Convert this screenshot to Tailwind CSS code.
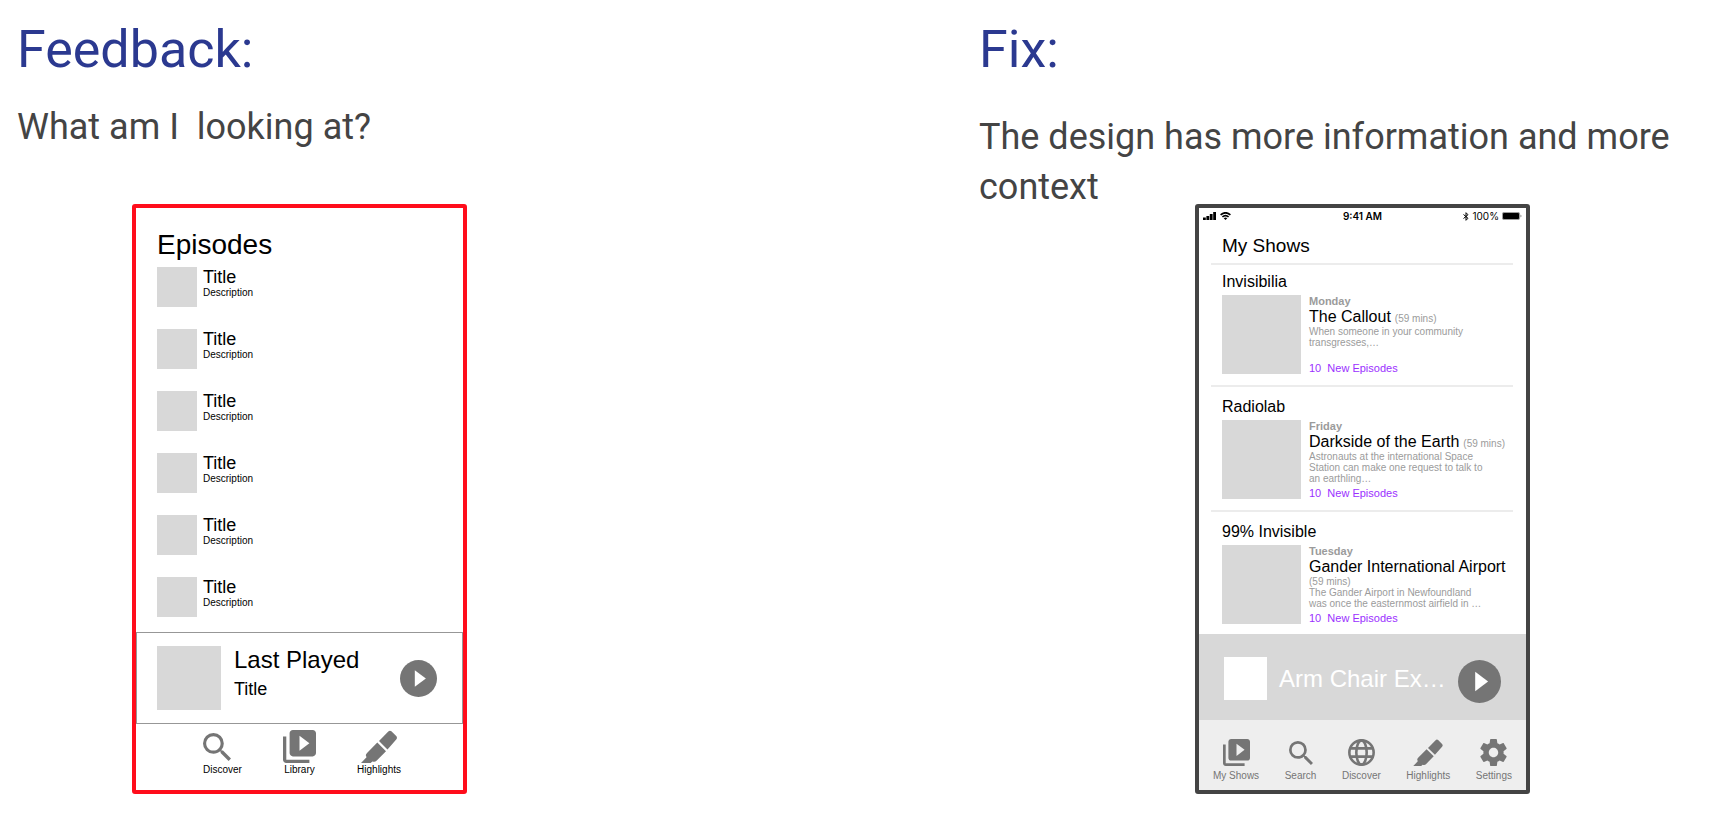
<!DOCTYPE html>
<html lang="en">
<head>
<meta charset="utf-8">
<title>Feedback and fix</title>
<script src="https://cdn.jsdelivr.net/npm/@tailwindcss/browser@4"></script>
</head>
<body class="bg-white font-['Liberation_Sans',Arial,sans-serif] text-black">
<svg class="hidden" aria-hidden="true">
  <symbol id="search" viewBox="3 3 17.5 17.5"><path d="M15.5 14h-.79l-.28-.27A6.471 6.471 0 0 0 16 9.5 6.5 6.5 0 1 0 9.5 16c1.61 0 3.09-.59 4.23-1.57l.27.28v.79l5 4.99L20.49 19l-4.99-5zm-6 0C7.01 14 5 11.99 5 9.5S7.01 5 9.5 5 14 7.01 14 9.5 11.99 14 9.5 14z"/></symbol>
  <symbol id="library" viewBox="2 2 20 20"><path d="M4 6H2v14c0 1.1.9 2 2 2h14v-2H4V6zm16-4H8c-1.1 0-2 .9-2 2v12c0 1.1.9 2 2 2h12c1.1 0 2-.9 2-2V4c0-1.1-.9-2-2-2zm-8 12.5v-9l6 4.5-6 4.5z"/></symbol>
  <symbol id="play" viewBox="2 2 20 20"><circle cx="12" cy="12" r="10"/><path fill="#fff" d="M10 16.500l6-4.500-6-4.500z"/></symbol>
  <symbol id="marker" viewBox="0 0 36 33"><path d="M0 33 5.500 27.300 4.800 25.200Q4.800 24 6.500 22.400L16.300 12.600 25 21.200 15.500 30.800Q14.300 32 12.500 31.700L11.300 31.500 9.700 33zM18 11 27.300 1.400Q28.800 0 30.400 1.200L35.200 6Q36.700 7.700 35.200 9.600L26.500 19.400z"/></symbol>
  <symbol id="globe" viewBox="0 0 26 26"><g fill="none" stroke="#757575" stroke-width="2.500"><circle cx="13" cy="13" r="11.700"/><ellipse cx="13" cy="13" rx="5" ry="11.700"/><path d="M2 9h22M2 17h22"/></g></symbol>
  <symbol id="gear" viewBox="2 2 20 20"><path d="M19.430 12.980c.04-.32.07-.64.07-.98s-.03-.66-.07-.98l2.110-1.650c.19-.15.24-.42.12-.64l-2-3.460c-.12-.22-.39-.3-.61-.22l-2.490 1c-.52-.4-1.080-.73-1.690-.98l-.38-2.650C14.460 2.180 14.250 2 14 2h-4c-.25 0-.46.18-.49.42l-.38 2.650c-.61.25-1.170.59-1.690.98l-2.490-1c-.23-.09-.49 0-.61.22l-2 3.460c-.13.22-.07.49.12.64l2.110 1.650c-.04.32-.07.65-.07.98s.03.66.07.98l-2.110 1.650c-.19.15-.24.42-.12.64l2 3.460c.12.22.39.3.61.22l2.490-1c.52.4 1.080.73 1.690.98l.38 2.650c.03.24.24.42.49.42h4c.25 0 .46-.18.49-.42l.38-2.650c.61-.25 1.170-.59 1.690-.98l2.490 1c.23.09.49 0 .61-.22l2-3.460c.12-.22.07-.49-.12-.64l-2.110-1.650zM12 15.500c-1.930 0-3.500-1.570-3.500-3.500s1.570-3.500 3.500-3.500 3.500 1.570 3.500 3.500-1.570 3.500-3.500 3.500z"/></symbol>
</svg>

<main class="grid grid-cols-[962fr_762fr] items-start pt-5">
  <section class="px-[17px]">
    <h1 class="font-[Roboto,sans-serif] text-[52px] leading-[60px] text-[#2b3990]">Feedback:</h1>
    <p class="mt-[22px] font-[Roboto,sans-serif] text-[36px] leading-[50px] whitespace-pre-wrap text-[#444]">What am I  looking at?</p>

    <div class="mt-[52px] ml-[115px] w-[335px] rounded-[3px] border-4 border-[#ff0d1b] pt-[21px] pb-[14px]">
      <h2 class="pl-[21px] text-[28px] leading-8">Episodes</h2>
      <ul class="mt-[6px] flex flex-col gap-[22px] pl-[21px]">
        <li class="flex h-10 gap-[6px]"><span class="size-10 bg-[#d8d8d8]"></span><div><h3 class="text-lg leading-5">Title</h3><p class="text-[10px] leading-3">Description</p></div></li>
        <li class="flex h-10 gap-[6px]"><span class="size-10 bg-[#d8d8d8]"></span><div><h3 class="text-lg leading-5">Title</h3><p class="text-[10px] leading-3">Description</p></div></li>
        <li class="flex h-10 gap-[6px]"><span class="size-10 bg-[#d8d8d8]"></span><div><h3 class="text-lg leading-5">Title</h3><p class="text-[10px] leading-3">Description</p></div></li>
        <li class="flex h-10 gap-[6px]"><span class="size-10 bg-[#d8d8d8]"></span><div><h3 class="text-lg leading-5">Title</h3><p class="text-[10px] leading-3">Description</p></div></li>
        <li class="flex h-10 gap-[6px]"><span class="size-10 bg-[#d8d8d8]"></span><div><h3 class="text-lg leading-5">Title</h3><p class="text-[10px] leading-3">Description</p></div></li>
        <li class="flex h-10 gap-[6px]"><span class="size-10 bg-[#d8d8d8]"></span><div><h3 class="text-lg leading-5">Title</h3><p class="text-[10px] leading-3">Description</p></div></li>
      </ul>
      <div class="mt-[15px] flex gap-[13px] border border-[#979797] py-[13px] pr-[25px] pl-5">
        <span class="size-16 bg-[#d8d8d8]"></span>
        <div><h3 class="text-2xl leading-7">Last Played</h3><p class="mt-[5px] text-lg leading-5">Title</p></div>
        <button type="button" aria-label="Play" class="ml-auto self-center"><svg class="size-[37px] fill-[#757575]"><use href="#play"/></svg></button>
      </div>
      <nav class="flex justify-between pt-[6px] pr-[62px] pl-[67px] text-[10px] leading-3">
        <a href="#" class="flex flex-col items-start gap-px"><span class="flex h-[33px] items-center"><svg class="size-7 fill-[#757575]"><use href="#search"/></svg></span>Discover</a>
        <a href="#" class="flex flex-col items-center gap-px"><svg class="size-[33px] fill-[#757575]"><use href="#library"/></svg>Library</a>
        <a href="#" class="flex flex-col items-center gap-px"><svg class="h-[33px] w-9 fill-[#757575]"><use href="#marker"/></svg>Highlights</a>
      </nav>
    </div>
  </section>

  <section class="px-[17px]">
    <h1 class="font-[Roboto,sans-serif] text-[52px] leading-[60px] text-[#2b3990]">Fix:</h1>
    <p class="mt-8 font-[Roboto,sans-serif] text-[36px] leading-[50px] text-[#444]">The design has more information and more context</p>

    <div class="-mt-2 ml-[216px] w-[335px] rounded-[3px] border-4 border-[#444]">
      <div class="grid h-4 grid-cols-3 items-center px-1 font-[Inter,sans-serif] text-[10px] leading-3">
        <span class="flex items-center gap-1">
          <svg class="h-2 w-[13px]" viewBox="0 0 13 8"><path d="M0 5.500h2.800V8H0zM3.400 4h2.800v4H3.400zM6.800 2h2.800v6H6.800zM10.200 0H13v8h-2.800z"/></svg>
          <svg class="h-2 w-[11px]" viewBox="0 0 11 8"><path fill="none" stroke="#000" stroke-width="1.700" d="M.6 2.900Q5.500-1.300 10.400 2.900M2.400 4.900Q5.500 2.200 8.600 4.900"/><path d="M3.700 6.200Q5.500 4.900 7.300 6.200L5.500 8z"/></svg>
        </span>
        <span class="text-center font-semibold whitespace-nowrap">9:41 AM</span>
        <span class="flex items-center justify-end gap-[3px]">
          <svg class="h-[9px] w-[6px]" viewBox="0 0 6 9"><path fill="none" stroke="#000" d="M.5 2.500 5 6.300 3 8.300V.7l2 2L.5 6.500"/></svg>
          100%
          <svg class="h-2 w-5" viewBox="0 0 20 8"><rect x=".4" y=".4" width="17.200" height="7.200" rx="1.500" fill="none" stroke="#777" stroke-width=".8"/><rect x="1" y="1" width="16" height="6" rx=".7"/><path fill="#777" d="M18.500 2.700q1 .2 1 1.300t-1 1.300z"/></svg>
        </span>
      </div>
      <div class="mr-[13px] ml-3">
        <h2 class="mt-[10px] pb-[5px] pl-[11px] text-[19px] leading-6">My Shows</h2>
        <article class="border-t-2 border-[#ececec] pt-[7px] pb-[11px] pl-[11px]">
          <h3 class="text-base leading-5">Invisibilia</h3>
          <div class="mt-[3px] flex gap-2">
            <span class="size-[79px] shrink-0 bg-[#d8d8d8]"></span>
            <div class="flex grow flex-col text-[10px] leading-[11px] text-[#9b9b9b]">
              <p class="text-[11px] leading-[13px] font-bold">Monday</p>
              <div class="flex flex-wrap items-baseline gap-x-1"><h4 class="text-base leading-[18px] whitespace-nowrap text-black">The Callout</h4><span>(59 mins)</span></div>
              <p class="max-w-[174px]">When someone in your community transgresses,…</p>
              <a href="#" class="mt-auto text-[11px] leading-3 whitespace-pre text-[#9b30ff]">10  New Episodes</a>
            </div>
          </div>
        </article>
        <article class="border-t-2 border-[#ececec] pt-[10px] pb-[11px] pl-[11px]">
          <h3 class="text-base leading-5">Radiolab</h3>
          <div class="mt-[3px] flex gap-2">
            <span class="size-[79px] shrink-0 bg-[#d8d8d8]"></span>
            <div class="flex grow flex-col text-[10px] leading-[11px] text-[#9b9b9b]">
              <p class="text-[11px] leading-[13px] font-bold">Friday</p>
              <div class="flex flex-wrap items-baseline gap-x-1"><h4 class="text-base leading-[18px] whitespace-nowrap text-black">Darkside of the Earth</h4><span>(59 mins)</span></div>
              <p class="max-w-[174px]">Astronauts at the international Space Station can make one request to talk to an earthling…</p>
              <a href="#" class="mt-auto text-[11px] leading-3 whitespace-pre text-[#9b30ff]">10  New Episodes</a>
            </div>
          </div>
        </article>
        <article class="border-t-2 border-[#ececec] pt-[10px] pb-[10px] pl-[11px]">
          <h3 class="text-base leading-5">99% Invisible</h3>
          <div class="mt-[3px] flex gap-2">
            <span class="size-[79px] shrink-0 bg-[#d8d8d8]"></span>
            <div class="flex grow flex-col text-[10px] leading-[11px] text-[#9b9b9b]">
              <p class="text-[11px] leading-[13px] font-bold">Tuesday</p>
              <div class="flex flex-wrap items-baseline gap-x-1"><h4 class="text-base leading-[18px] whitespace-nowrap text-black">Gander International Airport</h4><span>(59 mins)</span></div>
              <p class="max-w-[174px]">The Gander Airport in Newfoundland was once the easternmost airfield in …</p>
              <a href="#" class="mt-auto text-[11px] leading-3 whitespace-pre text-[#9b30ff]">10  New Episodes</a>
            </div>
          </div>
        </article>
      </div>
      <div class="flex gap-3 bg-[#d8d8d8] pt-[23px] pr-[27px] pb-[17px] pl-[25px]">
        <span class="size-[43px] shrink-0 bg-white"></span>
        <p class="text-2xl leading-[43px] whitespace-nowrap text-white">Arm Chair Ex…</p>
        <button type="button" aria-label="Play" class="mt-[3px] ml-auto shrink-0"><svg class="size-[43px] fill-[#757575]"><use href="#play"/></svg></button>
      </div>
      <nav class="flex justify-between bg-[#eee] pt-[19px] pr-[14px] pb-2 pl-[14px] text-[10px] leading-3 text-[#757575]">
        <a href="#" class="flex flex-col items-center gap-1"><svg class="size-[27px] fill-[#757575]"><use href="#library"/></svg>My Shows</a>
        <a href="#" class="flex flex-col items-center gap-1"><span class="flex h-[27px] items-center"><svg class="size-6 fill-[#757575]"><use href="#search"/></svg></span>Search</a>
        <a href="#" class="flex flex-col items-center gap-1"><svg class="size-[27px]"><use href="#globe"/></svg>Discover</a>
        <a href="#" class="flex flex-col items-center gap-1"><svg class="h-[27px] w-[30px] fill-[#757575]"><use href="#marker"/></svg>Highlights</a>
        <a href="#" class="flex flex-col items-center gap-1"><svg class="size-[27px] fill-[#757575]"><use href="#gear"/></svg>Settings</a>
      </nav>
    </div>
  </section>
</main>
</body>
</html>
